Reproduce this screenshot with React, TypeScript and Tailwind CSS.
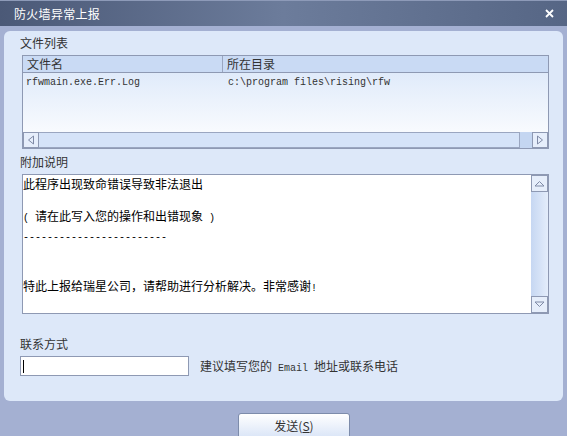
import React from "react";

const cjk = { fontFamily: '"Noto Sans CJK SC", "Liberation Sans", sans-serif' };
const mono = { fontFamily: '"Liberation Mono", "Noto Sans CJK SC", monospace' };

function TriLeft() {
  return (
    <svg width="8" height="10" viewBox="0 0 8 10">
      <path d="M6.5 1 L1.5 5 L6.5 9 Z" fill="none" stroke="#7f8aa6" strokeWidth="1" />
    </svg>
  );
}
function TriRight() {
  return (
    <svg width="8" height="10" viewBox="0 0 8 10">
      <path d="M1.5 1 L6.5 5 L1.5 9 Z" fill="none" stroke="#7f8aa6" strokeWidth="1" />
    </svg>
  );
}
function TriUp() {
  return (
    <svg width="11" height="7" viewBox="0 0 11 7">
      <path d="M1 6 L5.5 1.5 L10 6 Z" fill="none" stroke="#7f8aa6" strokeWidth="1" />
    </svg>
  );
}
function TriDown() {
  return (
    <svg width="11" height="7" viewBox="0 0 11 7">
      <path d="M1 1 L5.5 5.5 L10 1 Z" fill="none" stroke="#7f8aa6" strokeWidth="1" />
    </svg>
  );
}

function M({ children }: { children: React.ReactNode }) {
  return (
    <span className="text-[10px] whitespace-pre" style={mono}>
      {children}
    </span>
  );
}

export default function App() {
  return (
    <div className="w-[567px] h-[436px] overflow-hidden bg-[#a4b0d2] flex flex-col text-[12px]" style={cjk}>
      {/* Title bar */}
      <div className="h-[26px] shrink-0 border-t border-[#8d9ab8] bg-gradient-to-r from-[#4b5977] via-[#6c7c9b] to-[#566685] flex items-center justify-between pl-[14px] pr-[13px]">
        <span className="text-white text-[12px] leading-none tracking-[0.3px]">防火墙异常上报</span>
        <svg width="9" height="9" viewBox="0 0 9 9">
          <path d="M1 1 L8 8 M8 1 L1 8" stroke="#ffffff" strokeWidth="1.8" />
        </svg>
      </div>

      {/* Panel */}
      <div className="ml-[4px] mr-[4px] mt-[5px] h-[370px] shrink-0 rounded-[6px] bg-[#dde8f9] flex flex-col pl-[16px] pr-[14px]">
        <div className="mt-[5px] h-[14px] leading-[14px] text-[#333333]">文件列表</div>

        {/* List box */}
        <div className="mt-[5px] ml-[2px] w-[527px] h-[94px] border border-[#8e99b3] bg-gradient-to-b from-[#d9e6f9] to-[#ffffff] flex flex-col">
          <div className="h-[17px] flex border-b border-[#8e99b3] bg-[#c9daf4] text-[#333333] leading-[16px]">
            <div className="w-[200px] pl-[4px] border-r border-[#9aa6c0]">文件名</div>
            <div className="flex-1 pl-[4px]">所在目录</div>
          </div>
          <div className="h-[18px] flex items-center text-[10px] text-[#333333]" style={mono}>
            <div className="w-[200px] pl-[3px]">rfwmain.exe.Err.Log</div>
            <div className="flex-1 pl-[5px]">c:\program files\rising\rfw</div>
          </div>
          <div className="flex-1" />
          <div className="h-[16px] flex bg-[#dde8f9]">
            <div className="w-[16px] h-[16px] border border-[#8e99b3] bg-[#e6eefb] flex items-center justify-center">
              <TriLeft />
            </div>
            <div className="w-[481px] h-[16px] border-y border-r border-[#9aa6c0] bg-[#d5e3f8]" />
            <div className="flex-1 bg-[#c4d6f1]" />
            <div className="w-[16px] h-[16px] border border-[#8e99b3] bg-[#e6eefb] flex items-center justify-center">
              <TriRight />
            </div>
          </div>
        </div>

        <div className="mt-[6px] h-[14px] leading-[14px] text-[#333333]">附加说明</div>

        {/* Textarea */}
        <div className="mt-[5px] ml-[2px] w-[527px] h-[140px] border border-[#8e99b3] bg-white flex">
          <div className="flex-1 pt-[1px] pl-[0px] text-[12px] leading-[16px] text-black">
            <div>此程序出现致命错误导致非法退出</div>
            <div>&nbsp;</div>
            <div>
              <M>( </M>请在此写入您的操作和出错现象<M> )</M>
            </div>
            <div>
              <M>------------------------</M>
            </div>
            <div>&nbsp;</div>
            <div>&nbsp;</div>
            <div>
              特此上报给瑞星公司，请帮助进行分析解决。非常感谢<M>!</M>
            </div>
          </div>
          <div className="w-[17px] flex flex-col bg-gradient-to-r from-[#c6d7f2] to-[#e4edfb]">
            <div className="h-[17px] border border-[#8e99b3] bg-[#e6eefb] flex items-center justify-center">
              <TriUp />
            </div>
            <div className="flex-1" />
            <div className="h-[17px] border border-[#8e99b3] bg-[#e6eefb] flex items-center justify-center">
              <TriDown />
            </div>
          </div>
        </div>

        <div className="mt-[23px] h-[14px] leading-[14px] text-[#333333]">联系方式</div>

        <div className="mt-[5px] flex items-center">
          <div className="w-[169px] h-[20px] border border-[#8e99b3] bg-white flex items-center pl-[2px]">
            <div className="w-[1px] h-[13px] bg-black" />
          </div>
          <div className="ml-[11px] text-[#333333] whitespace-pre">
            建议填写您的<M> Email </M>地址或联系电话
          </div>
        </div>
      </div>

      {/* Button */}
      <div className="flex justify-center mt-[12px] pl-[21px]">
        <div className="w-[112px] h-[28px] rounded-t-[3px] border border-[#7d8cab] bg-gradient-to-b from-[#ffffff] to-[#d6e2f6] flex justify-center pt-[3px] text-[#333333]">
          <span>
            发送(<span className="underline">S</span>)
          </span>
        </div>
      </div>
    </div>
  );
}
